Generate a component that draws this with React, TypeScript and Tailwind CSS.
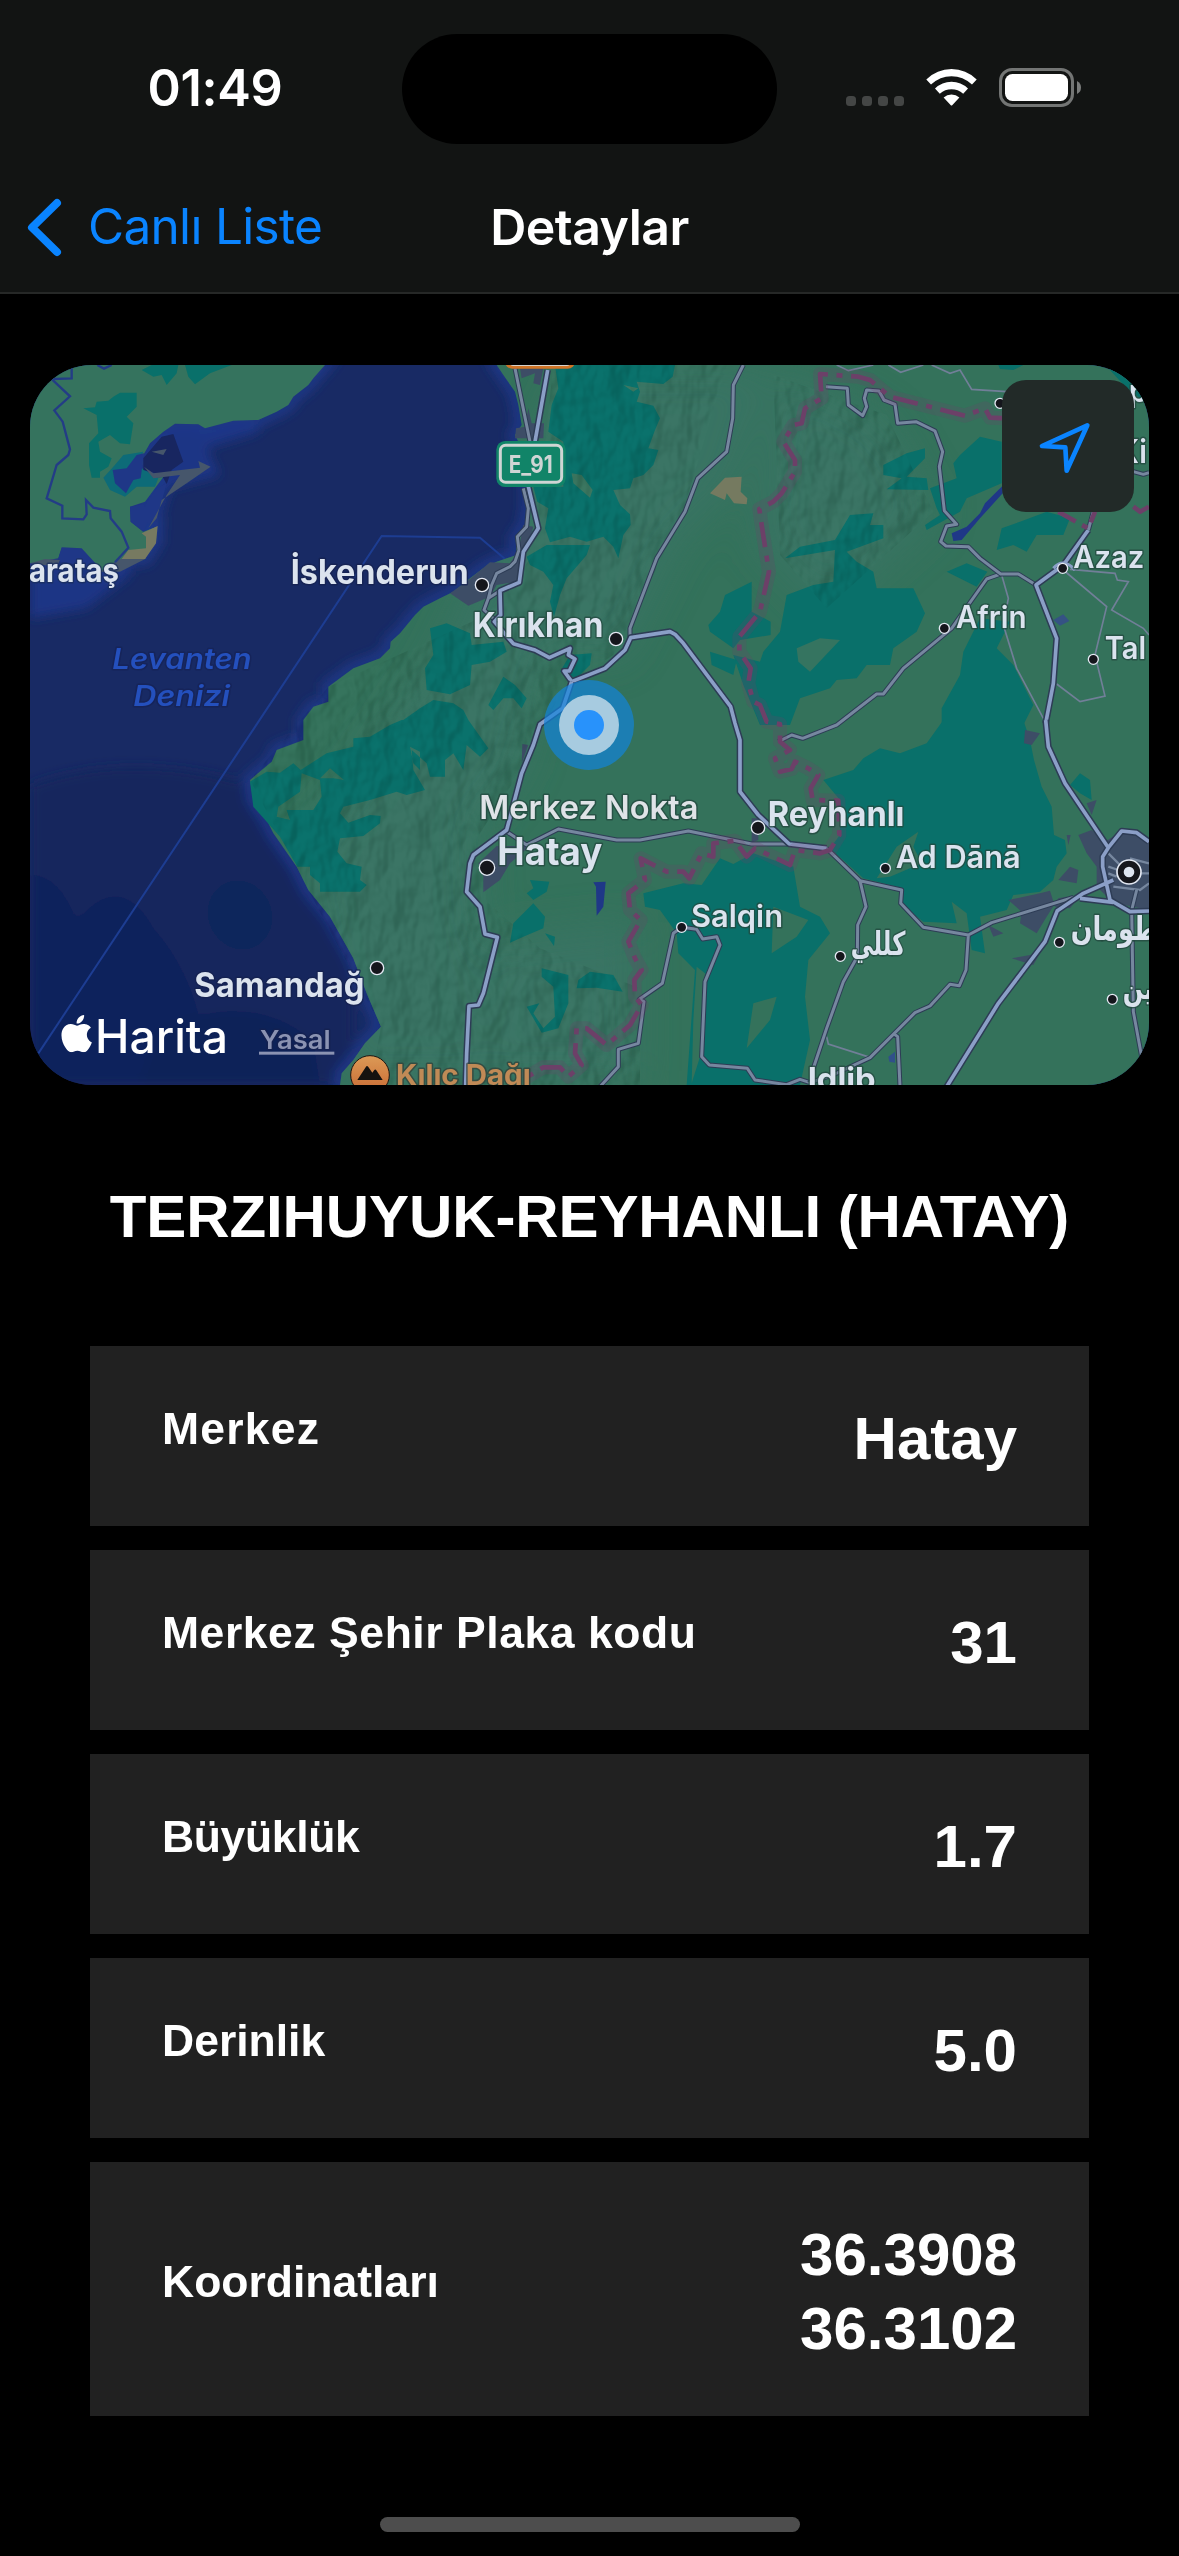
import React from "react";
import { SiApple } from "react-icons/si";

const FOREST = "#09706a";
const URBAN = "#3d4d66";

/* The map is drawn on a 3x grid, split into a 3 by 2 set of tiles. */
function Tile({ col, row, children }: { col: number; row: number; children: React.ReactNode }) {
  return <g transform={`translate(${col * 1140} ${row * 1095})`}>{children}</g>;
}

function Road({ d, major }: { d: string; major?: boolean }) {
  return (
    <g fill="none" strokeLinejoin="round">
      <path d={d} stroke="#2d3c55" strokeWidth={major ? 20 : 15} />
      <path d={d} stroke={major ? "#8b9fc7" : "#76879f"} strokeWidth={major ? 11 : 9} />
    </g>
  );
}

function Minor({ d }: { d: string }) {
  return <path d={d} fill="none" stroke="#717f98" strokeWidth={5} />;
}

type LabelProps = {
  x: number;
  y: number;
  w?: number;
  size?: number;
  weight?: number;
  fill?: string;
  italic?: boolean;
  halo?: string;
  children: string;
};

function Label({ x, y, w, size = 102, weight, fill = "#dbe3ee", italic, halo = "#23483f", children }: LabelProps) {
  return (
    <text
      x={x}
      y={y}
      textLength={w}
      lengthAdjust="spacingAndGlyphs"
      fontSize={size}
      fontWeight={weight ?? (size > 100 ? 700 : 600)}
      fontStyle={italic ? "italic" : "normal"}
      fill={fill}
      stroke={halo}
      strokeWidth={9}
      strokeLinejoin="round"
      strokeOpacity={0.75}
      paintOrder="stroke"
      fontFamily="Inter, 'DejaVu Sans', sans-serif"
    >
      {children}
    </text>
  );
}

function Town({ x, y, r = 17 }: { x: number; y: number; r?: number }) {
  return <circle cx={x} cy={y} r={r} fill="#15161c" stroke="#e3e8f2" strokeWidth={4} />;
}

const MAIN_LAND =
  "M1430 30L1450 60L1485 110L1495 150L1505 210L1485 240L1510 290L1525 400L1525 450L1515 510L1487 550L1490 600L1430 620L1390 640L1350 670L1300 710L1260 730L1210 755L1185 780L1140 835L1112 860L1110 880L1080 910L1000 940L925 995L925 1040L880 1055L850 1095V1155L770 1185L755 1220L690 1275L700 1335L740 1395L760 1435L830 1535L865 1605L930 1685L1000 1810L1040 1915L1083 2015L1035 2065L1000 2115L965 2155L960 2190H3387V30Z";
const WEST_LAND =
  "M30 30H915L880 70L865 90L820 125L805 150L770 170L715 195L640 197L555 220L535 208L465 206L430 230L390 265L370 300L365 340L385 370L430 366L405 400L375 440L330 455L332 500L370 530L410 515L408 560L375 610L305 612L270 630L250 650L205 625L160 580H125L115 610L30 625Z";

function Sea() {
  return (
    <g>
      <rect x="30" y="30" width="3357" height="2160" fill="#182a64" />
      <g filter="url(#soft)">
        <path d="M30 1290Q330 1180 700 1290Q900 1500 1000 1850V2190H30Z" fill="#18255d" />
        <path d="M30 1560Q120 1560 170 1700Q300 1540 400 1720Q560 1900 560 2190H30Z" fill="#0b235b" />
        <ellipse cx="660" cy="1680" rx="95" ry="105" fill="#0c265b" transform="rotate(-25 660 1680)" />
        <path d="M420 2020Q700 1900 880 2060L900 2190H360Z" fill="#0e2259" />
        <path d="M30 625L250 660L400 560L450 400L600 360L560 280L720 230L700 190L400 220L330 660L200 760L30 790Z" fill="#1e3685" />
        <g fill="none" stroke="#1f3a8b" strokeWidth="40" opacity="0.85">
          <path d={MAIN_LAND} />
          <path d={WEST_LAND} />
        </g>
      </g>
      <path d="M55 2095L1085 543L1380 548L1455 612" fill="none" stroke="#1d3d92" strokeWidth="6" />
    </g>
  );
}

function Land() {
  return (
    <g>
      <path d={WEST_LAND} fill="#35735e" />
      <path d={MAIN_LAND} fill="#34725b" />
      <g clipPath="url(#mainland)">
        <g filter="url(#wide)" fill="#3a7466" opacity="0.75">
          <path d="M1650 30H2260L2150 400L1980 560L1800 920L1600 870L1500 1250L1380 1400L1400 2190H960L830 1500L1250 900Z" />
          <path d="M2280 30L2600 200L2760 480L2420 780L2200 560Z" />
          <path d="M1400 1750L1850 1700V2190H1400Z" />
        </g>
      </g>
      <g fill={FOREST}>
        <path d="M365 45L395 30H475L470 55L440 90L425 60L400 65ZM495 30H635L570 55L525 88L505 65Z" />
        <path d="M280 125L300 113H350L350 155L320 185L340 205L330 268L300 265L270 240L235 260L240 290L275 310L265 335L240 350L240 368L215 368L207 330L207 265L235 235L230 180L190 160L225 157L230 140L265 137Z" />
      </g>
      <path d="M250 368L280 335L310 300L370 290L350 330L415 370L405 395L350 395L315 425L270 405Z" fill="#0d6b78" />
      <path d="M278 345L320 340L350 300L372 295L362 370L340 375L318 415L285 385ZM115 610L125 577L185 580L240 640L210 640L150 625L120 620Z" fill="#1f3787" />
      <path d="M370 310L425 245L460 237L490 320L455 345L440 388L425 360L370 345Z" fill="#182660" />
      <path d="M330 455L370 448L395 480L370 530L332 500ZM410 400L440 385L425 440L412 480L385 510L375 450Z" fill="#1f3787" />
      <path d="M395 290L440 282L430 300ZM372 335L400 355L540 338L535 318L572 335L500 385L425 435L410 490L385 520L440 420L480 360L400 370ZM30 625L75 612L120 615L110 635ZM240 650L300 612L380 610L300 650Z" fill="#46566b" />
      <path d="M365 535L413 513L408 565L375 612H305L325 585L378 580V545Z" fill="#777a61" />

      <Tile col={1} row={0}>
        <g fill={FOREST}>
          <path d="M465 30H825L818 65L790 87L710 80L720 110L710 140L760 152L780 190L765 225L745 280L775 285L760 330L730 360L700 370L690 400L640 405L660 450L690 478L692 510L670 540L655 610L640 575L610 545L560 560L510 545L450 562L435 520L445 460L412 440L400 395H490V260L445 230L455 150L475 100Z" />
          <path d="M380 605L440 570H570L560 600L500 670L480 720L462 785L450 740L460 690L430 650L390 630Z" />
          <path d="M90 820L140 805L210 835L215 870L310 860L320 890L270 920L215 930L210 990L150 1018L80 1005L75 940L100 900ZM310 965L345 990L380 1030L365 1060L340 1030H310L280 1065L265 1050ZM510 900L575 895L570 930L530 970L480 950Z" />
          <path d="M1055 680V770L1112 800V840L1020 855L1000 880L930 830L925 810L960 770L975 720ZM930 890L1010 915L1000 960L935 930Z" />
        </g>
        <path d="M515 355L545 360L578 405L570 428L520 385ZM670 90L715 100L700 110Z" fill="#3a755f" />
        <path d="M930 415L975 368L1025 365L1022 410L1042 430L1040 448L1002 445L980 415L975 435Z" fill="#757a60" />
        <g fill={URBAN}>
          <path d="M360 40H430L420 90L400 85L405 55L365 70ZM345 250L348 220L375 215L385 160L395 205L432 205L430 250Z" />
          <path d="M150 715L200 680L270 622L330 625L355 590L370 510L400 515L375 600L350 680L290 690L270 725L205 752Z" />
        </g>
      </Tile>

      <Tile col={2} row={0}>
        <g fill={FOREST}>
          <path d="M15 610L60 575L165 555L210 480L280 475L270 510H310V550L200 590L230 620L280 650L290 700L400 700L435 775L410 830L340 880L330 930L260 930L230 970L170 975L150 1000L60 1030L30 1110H-60L-110 990L-140 900L-60 920L-50 890L0 830L20 720L100 690L160 680L165 585Z" />
          <path d="M310 330L380 295L435 280V310L380 365L440 370L445 405L320 403L365 370L310 360ZM540 300L600 245L665 260V385L560 430L540 470L440 525L435 510L480 480L470 460L450 400L530 370L520 325ZM500 650L560 625L622 650L590 695Z" />
          <path d="M600 790L690 800L650 880L700 930L730 990L760 1050L730 1110H485V1060L540 960L550 890ZM665 520L720 500L800 470L870 490L850 540L770 540L740 590L700 570L650 585ZM985 40L1060 60L1107 150L1040 100ZM655 30H730L700 45L660 42Z" />
        </g>
        <path d="M50 880L120 850L180 855L90 950L55 920Z" fill="#357460" />
        <path d="M515 535L560 515L600 475L615 445L668 392V415L600 490L545 555L520 558Z" fill="#1f3787" />
        <path d="M820 795L850 778L868 798L840 812Z" fill="#355284" />
      </Tile>

      <Tile col={0} row={1}>
        <path
          fillRule="evenodd"
          fill={FOREST}
          d="M690 185L740 155L780 158L820 130L842 150L920 100L1000 80V55L1050 50L1110 15L1145 0H1345L1405 85L1380 110L1340 75L1330 150L1300 100L1275 120V170H1230L1220 130L1175 90L1180 150L1215 210L1160 225L1130 215L1050 240L970 260L960 280L985 308L1050 285L1082 288L1080 310L1030 348L960 355L952 395L980 430L1025 440L1020 480L1040 495L1020 515H900V490L870 465V440H832L780 350L700 260ZM845 160L900 180L905 230L880 270H800L810 300L770 290L775 260L840 215ZM900 175L930 145L972 180L940 175ZM1170 80L1200 95V150L1180 130Z"
        />
        <path d="M1150 0L1200 -35L1240 -60L1300 -50L1330 -30L1345 0Z" fill={FOREST} />
      </Tile>

      <Tile col={1} row={1}>
        <g fill={FOREST}>
          <path d="M390 480L448 485L440 515L400 540L380 520L400 505ZM400 550L435 590L430 625L370 650L330 668L340 610ZM435 640L465 650L462 678ZM425 745L505 765V850L475 925L425 938L380 860L418 850L400 880L430 925L465 890L460 800L425 770ZM535 780L570 755L640 765L668 815L590 803L530 805Z" />
          <path
            fillRule="evenodd"
            d="M730 520L850 490L905 495L960 415L1000 432L1060 400L1180 440L1200 560L1260 590L1290 640L1225 720L1215 830L1230 960L1200 1095H860L885 750L835 700L830 640L780 570L735 560ZM1120 560L1225 600L1190 650L1115 700ZM1060 850L1130 830L1110 900L1040 985ZM890 740L915 760L900 1010L875 1090L880 900Z"
          />
        </g>
        <path d="M235 430L290 378L390 378L330 430L300 480L250 517V470ZM367 72L385 75L365 130ZM1055 295H1075V360L1055 368Z" fill={URBAN} />
        <path d="M580 487L617 485L610 560L590 587L588 500Z" fill="#1f3787" />
      </Tile>

      <Tile col={2} row={1}>
        <path
          fillRule="evenodd"
          fill={FOREST}
          d="M490 0H730L750 60L762 120L785 200L815 260L822 345L855 360L860 400L830 440L820 480L780 515L700 525L680 570L600 590L615 700L575 690L560 580L515 545L530 610L430 605L360 550L370 505L250 475L150 385L180 345V240L130 180L220 150L250 115L300 85L360 100L440 70ZM350 380L415 335L400 380L425 430L330 470L290 475ZM870 195L900 160L930 180L935 240L900 220Z"
        />
        <g fill={URBAN}>
          <path d="M735 30L780 40L755 75L732 70ZM920 250L950 240L935 285ZM860 345L872 345L865 375ZM895 345L935 330L975 365L1025 333L1107 360V570L1000 548L950 500V440L920 400ZM685 540L780 520L810 512L825 560L870 565L890 540L860 530L835 535L800 590L770 640L720 610L725 575ZM835 480L870 440L895 450L890 490ZM695 715L780 700L760 735ZM625 615L670 640L640 650Z" />
        </g>
        <path d="M325 1010L345 995V1028L328 1025Z" fill="#30508a" />
      </Tile>
    </g>
  );
}

function Roads() {
  return (
    <g>
      <Tile col={0} row={0}>
        <path
          d="M155 30V70L95 72L150 124L103 166L128 200L150 283L145 300L110 330L80 430L127 452V490L190 493L200 478L198 435L220 458L270 468L272 490L305 530L325 578L285 622M232 30L252 41L275 30"
          fill="none"
          stroke="#233c86"
          strokeWidth="7"
        />
      </Tile>

      <Tile col={2} row={0}>
        <Minor d="M170 30L205 47L280 30M325 30L362 52L430 30M455 30L510 55L540 45L575 103L680 110M850 645L980 755L945 900L975 1023L900 1040L830 987M870 643L1005 655L1012 675L1045 680L995 765L1090 820L1107 840M665 660L685 730L670 810L710 940L790 1090" />
      </Tile>
      <Tile col={2} row={1}>
        <Minor d="M140 950L145 972L270 1012" />
        <path d="M980 395L1020 435M985 440L1015 450M985 460L1010 470M1000 500L1080 510L1107 490M1050 415L1107 430M1080 460H1107" fill="none" stroke="#76879f" strokeWidth="7" />
      </Tile>

      <Tile col={1} row={0}>
        <Road d="M345 40L390 260M370 400L385 460L380 515L352 545L357 585L345 620L330 635L290 655L275 690L265 730L252 765L280 790M265 730L300 707" />
        <Road d="M1030 30L1000 90L998 190L980 290L893 370L855 470L770 610L690 820V850" />
      </Tile>
      <Tile col={1} row={1}>
        <Road d="M320 335L380 375L475 327L650 360H720L865 333L1055 372H1170" />
        <Road d="M845 622L890 628L908 657L950 650L960 675L915 785L905 1010L928 1035L1042 1045L1065 1080L1160 1094L1200 1078L1230 1088" />
        <Road d="M845 622L820 640L787 790L718 838L732 845L715 970L655 988V1040L600 1100" />
        <Road d="M1135 65L1175 45L1208 55L1310 15L1430 -78L1450 -78L1510 -155L1655 -275L1760 -423L1802 -438" />
      </Tile>
      <Tile col={2} row={0}>
        <Road d="M138 95L202 100L205 150L248 182L260 155L253 130L260 105L297 108L312 135L345 148L353 205L408 200L465 228L488 290L478 335L493 467L530 508L500 513L482 560L498 573L565 575L600 610L662 657H715L768 690" />
        <Road major d="M797 1105L820 985L830 850L768 690L850 630L925 525" />
        <Road d="M925 525L940 470M1060 350L1090 358L1107 353" />
        <path d="M820 640Q850 605 885 645" fill="none" stroke="#8b9fc7" strokeWidth="9" />
      </Tile>
      <Tile col={2} row={1}>
        <Road d="M140 385L240 482L365 510L362 550L430 622L565 645L635 608L880 532M565 645L558 750L538 797L510 793L450 858L405 878L270 1013L165 1062L85 1090M240 482L258 560L233 615L232 710L190 785L140 925L100 1045M340 940L353 950L360 1100M1070 510L1055 570L1060 875L1085 1010" />
        <Road major d="M797 0L805 80L855 190L985 383L968 410V440L990 540L1050 575L1107 573M985 383L1025 333L1070 338L1107 365M1000 480L910 520L832 572L795 665L655 850L500 1100M900 535L1000 547" />
      </Tile>
      <Tile col={1} row={0}>
        <Road
          major
          d="M443 45L405 260M385 395L415 520L370 590L358 682L300 707L302 780L283 800L340 866L405 885L448 908L510 880L505 900L525 912L508 948H492L515 980L615 940L675 885L692 848L810 830L825 838L850 865L992 1055L1005 1105L1020 1155V1310L1075 1380L1168 1467L1280 1480"
        />
        <Road
          major
          d="M515 980L488 1060L420 1108L400 1170L365 1255L320 1425L220 1500L210 1525L200 1610L240 1655L255 1737L292 1747L270 1835L250 1915L235 1950L207 1953L200 2095L197 2195"
        />
      </Tile>
    </g>
  );
}

const BORDER =
  "M1820 190L1770 188L1755 160L1695 182L1470 125L1410 75L1375 65L1260 57L1265 130L1215 160L1205 205L1180 210L1150 260L1185 315V350L1145 415L1120 440L1078 462L1088 530L1107 650L1080 770L1018 845V890L1052 940L1045 985L1060 1040L1080 1050L1100 1100L1140 1107V1160L1170 1185L1125 1210L1140 1250L1175 1242L1185 1220L1225 1240L1255 1260L1232 1300L1238 1335L1315 1337L1318 1440L1290 1485L1260 1495L1185 1485L1170 1530L1065 1480L1040 1505L1005 1457L940 1465V1505L905 1495L868 1570L850 1550H800L722 1510L735 1575L685 1615L690 1665L722 1695L685 1760L705 1810L725 1845L703 1875L705 1925L725 1950L690 2010L620 2070L560 2020H530L525 2095L545 2130L505 2165L480 2137H430L370 2173";

function Border() {
  return (
    <g transform="translate(1140 0)" fill="none" strokeLinejoin="round" stroke="#6c4068">
      <path d={BORDER} strokeWidth="42" opacity="0.22" />
      <path d={BORDER} strokeWidth="14" strokeDasharray="76 26 18 26" />
      <path d="M1975 470L2045 510L2065 520L2085 470M2200 455L2220 470L2247 455" strokeWidth="14" strokeDasharray="60 22 18 22" />
    </g>
  );
}

function Labels() {
  return (
    <g>
      <Tile col={0} row={0}>
        <Label x={27} y={682} w={270} size={98} weight={700} halo="#1b2f5c">arataş</Label>
        <Label x={812} y={687} w={534} halo="#16224f">İskenderun</Label>
        <Label x={277} y={941} w={418} size={86} fill="#2450bd" italic halo="#152357">Levanten</Label>
        <Label x={340} y={1053} w={290} size={86} fill="#2450bd" italic halo="#152357">Denizi</Label>
      </Tile>
      <Tile col={1} row={0}>
        <rect x="315" y="0" width="210" height="41" rx="22" fill="#cf7326" />
        <rect x="330" y="0" width="180" height="33" rx="10" fill="#d5d2cc" />
        <rect x="289" y="258" width="208" height="138" rx="26" fill="#118468" />
        <rect x="301" y="271" width="184" height="111" rx="16" fill="none" stroke="#cfd5d4" strokeWidth="9" />
        <text x="326" y="354" textLength="132" lengthAdjust="spacingAndGlyphs" fontFamily="Inter, sans-serif" fontWeight="700" fontSize="72" fill="#cfd5d4">
          E_91
        </text>
        <Town x={246} y={690} r={20} />
        <Label x={218} y={847} w={392}>Kırıkhan</Label>
        <Town x={648} y={852} r={20} />
        <circle cx="567" cy="1110" r="135" fill="#1285dd" opacity="0.68" />
        <circle cx="567" cy="1110" r="90" fill="#a7cbe0" />
        <circle cx="567" cy="1110" r="45" fill="#2892fb" />
      </Tile>
      <Tile col={2} row={0}>
        <Town x={660} y={145} r={15} />
        <Label x={1046} y={140} size={92}>p</Label>
        <Label x={1015} y={323} w={86} size={98}>Ki</Label>
        <Town x={848} y={640} r={15} />
        <Label x={880} y={639} w={213} size={92}>Azaz</Label>
        <Town x={493} y={820} r={15} />
        <Label x={528} y={820} w={212} size={92}>Afrin</Label>
        <Town x={940} y={913} r={15} />
        <Label x={974} y={912} w={124} size={92}>Tal</Label>
      </Tile>
      <Tile col={0} row={1}>
        <Town x={1071} y={744} r={20} />
        <Label x={523} y={831} w={510} halo="#16224f">Samandağ</Label>
        <SiApple x={114} y={885} size={112} color="#ffffff" />
        <text x="225" y="998" textLength="399" lengthAdjust="spacingAndGlyphs" fontFamily="Inter, sans-serif" fontWeight="500" fontSize="139" fill="#ffffff">
          Harita
        </text>
        <Label x={720} y={986} w={212} size={78} weight={600} fill="#8b93b2" halo="#16224f">Yasal</Label>
        <rect x="717" y="995" width="226" height="9" fill="#8b93b2" />
        <circle cx="1050" cy="1065" r="58" fill="url(#peak)" stroke="#1d1512" strokeWidth="3" />
        <path d="M1012 1080L1038 1040Q1041 1036 1045 1041L1057 1058L1063 1050Q1066 1046 1070 1052L1088 1080Z" fill="#15120f" />
      </Tile>
      <Tile col={1} row={1}>
        <Label x={238} y={296} w={657} size={96} weight={600} fill="#dfe3e7">Merkez Nokta</Label>
        <Town x={261} y={443} r={23} />
        <Label x={292} y={434} w={315} size={114}>Hatay</Label>
        <Town x={1074} y={323} r={20} />
        <Label x={1103} y={319} w={410}>Reyhanlı</Label>
        <Town x={845} y={622} r={15} />
        <Label x={873} y={620} w={276} size={92}>Salqin</Label>
        <Label x={-12} y={1095} w={404} size={86} weight={700} fill="#c08a56" halo="#33413a">Kılıç Dağı</Label>
      </Tile>
      <Tile col={2} row={1}>
        <Town x={316} y={445} r={15} />
        <Label x={347} y={445} w={375} size={92}>Ad Dānā</Label>
        <Town x={181} y={709} r={15} />
        <Label x={212} y={705} w={164} size={98}>كللي</Label>
        <Town x={838} y={667} r={15} />
        <Label x={872} y={661} w={262} size={98}>طومان</Label>
        <Town x={997} y={838} r={15} />
        <Label x={1028} y={836} w={92} size={94}>ين</Label>
        <Label x={83} y={1110} w={204} size={94} weight={700}>Idlib</Label>
        <circle cx="1047" cy="456" r="36" fill="#15161c" stroke="#e3e8f2" strokeWidth="5" />
        <circle cx="1047" cy="456" r="16" fill="#dde4f0" />
      </Tile>
    </g>
  );
}

function MapView() {
  return (
    <svg viewBox="30 30 3357 2160" className="block h-full w-full">
      <defs>
        <filter id="soft" x="-10%" y="-10%" width="120%" height="120%">
          <feGaussianBlur stdDeviation="16" />
        </filter>
        <filter id="wide">
          <feGaussianBlur stdDeviation="60" />
        </filter>
        <filter id="relief" x="0" y="0" width="100%" height="100%" colorInterpolationFilters="sRGB">
          <feTurbulence type="fractalNoise" baseFrequency="0.014 0.009" numOctaves="3" seed="8" result="noise" />
          <feDiffuseLighting in="noise" surfaceScale="34" lightingColor="#747474" diffuseConstant="1.3">
            <feDistantLight azimuth="215" elevation="50" />
          </feDiffuseLighting>
        </filter>
        <clipPath id="mainland">
          <path d={MAIN_LAND} />
        </clipPath>
        <clipPath id="hills" clipPathUnits="userSpaceOnUse">
          <path d="M1600 30H2120L1980 500L1780 900L1630 1000L1500 1250L1370 1450L1400 1640L1560 1780L1860 1900V2190H1050L1083 2015L865 1605L690 1275L925 995L1400 780L1540 600Z M2260 60L2600 180L2740 470L2420 760L2280 600Z" />
        </clipPath>
        <linearGradient id="peak" x1="0" y1="0" x2="0" y2="1">
          <stop offset="0" stopColor="#dc9a56" />
          <stop offset="1" stopColor="#c86a34" />
        </linearGradient>
      </defs>
      <Sea />
      <Land />
      <g clipPath="url(#hills)" className="mix-blend-soft-light" opacity="0.22">
        <rect x="30" y="30" width="3357" height="2160" filter="url(#relief)" />
      </g>
      <Roads />
      <Border />
      <Labels />
    </svg>
  );
}

function StatusIcons() {
  return (
    <svg viewBox="846 66 238 44" className="h-[44px] w-[238px]">
      <g fill="#444645">
        <rect x="846" y="96" width="10" height="10" rx="3.5" />
        <rect x="862" y="96" width="10" height="10" rx="3.5" />
        <rect x="878" y="96" width="10" height="10" rx="3.5" />
        <rect x="894" y="96" width="10" height="10" rx="3.5" />
      </g>
      <g fill="#ffffff">
        <path d="M926.3 79.5Q937 69 951.5 69T976.7 79.5L972 84.6Q963 76.3 951.5 76.3T931 84.6Z" />
        <path d="M935 88.6Q942 81.8 951.5 81.8T968 88.6L963.2 93.7Q958 89.3 951.5 89.3T939.8 93.7Z" />
        <path d="M943.6 97.4Q947 94.4 951.5 94.4T959.4 97.4L952.2 105.2Q951.5 106 950.8 105.2Z" />
        <rect x="1005" y="74" width="63" height="27" rx="7.5" />
      </g>
      <rect x="1000.5" y="69.5" width="72" height="36" rx="11.5" fill="none" stroke="#737574" strokeWidth="3" />
      <path d="M1077 81Q1081 83 1081 87.5T1077 94Z" fill="#7a7c7b" />
    </svg>
  );
}

type RowProps = { label: string; tracking?: string; tall?: boolean; children: React.ReactNode };

function Row({ label, tracking = "tracking-normal", tall, children }: RowProps) {
  return (
    <div className={`flex items-center justify-between bg-[#212121] px-[72px] pt-[5px] ${tall ? "h-[254px]" : "h-[180px]"}`}>
      <span className={`pb-[20px] text-[44.5px] leading-[54px] ${tracking}`}>{label}</span>
      <span className="text-right text-[60px] leading-[74px]">{children}</span>
    </div>
  );
}

export default function App() {
  return (
    <div className="flex h-[2556px] w-[1179px] flex-col overflow-hidden bg-black text-white">
      <header className="h-[294px] shrink-0 border-b-2 border-[#262827] bg-[#121413] font-['Inter',sans-serif]">
        <div className="grid h-[144px] grid-cols-[402px_375px_402px] items-center pt-[34px]">
          <span className="pb-[2px] pl-[28px] text-center text-[50.5px] leading-none font-semibold tracking-[-0.3px]">01:49</span>
          <div className="h-[110px] rounded-full bg-black" />
          <div className="pb-[2px] pl-[69px]">
            <StatusIcons />
          </div>
        </div>
        <div className="grid h-[149px] grid-cols-[400px_379px_400px] items-center pt-[17px]">
          <div className="flex items-center gap-[26px] pl-[26px] text-[#0a84ff]">
            <svg viewBox="0 0 36 60" className="h-[60px] w-[36px]">
              <path d="M31 6L6 30.5L31 55" fill="none" stroke="currentColor" strokeWidth="8" strokeLinecap="round" strokeLinejoin="round" />
            </svg>
            <span className="text-[49.5px] leading-none tracking-[-0.7px] whitespace-nowrap">Canlı Liste</span>
          </div>
          <h1 className="text-center text-[50px] leading-none font-semibold tracking-[-0.5px]">Detaylar</h1>
        </div>
      </header>

      <main className="flex flex-col pt-[71px] font-['Liberation_Sans',Arial,sans-serif] font-bold">
        <div className="relative mx-[30px] h-[720px] overflow-hidden rounded-[62px]">
          <MapView />
          <button className="absolute top-[15px] right-[15px] flex h-[132px] w-[132px] items-center justify-center rounded-[24px] bg-[#222a28]">
            <svg viewBox="667 75 396 396" className="h-full w-full">
              <path d="M923 211L787 273L857 277L861 347Z" fill="none" stroke="#0a84ff" strokeWidth="14" strokeLinejoin="round" />
            </svg>
          </button>
        </div>

        <h2 className="mt-[96px] text-center text-[60px] leading-[72px] tracking-[-0.1px] whitespace-nowrap">
          TERZIHUYUK-REYHANLI (HATAY)
        </h2>

        <section className="mx-[90px] mt-[93px] flex flex-col gap-[24px]">
          <Row label="Merkez" tracking="tracking-[1.2px]">Hatay</Row>
          <Row label="Merkez Şehir Plaka kodu" tracking="tracking-[0.55px]">31</Row>
          <Row label="Büyüklük" tracking="tracking-[-0.35px]">1.7</Row>
          <Row label="Derinlik">5.0</Row>
          <Row label="Koordinatları" tall>
            36.3908
            <br />
            36.3102
          </Row>
        </section>
      </main>

      <div className="mx-auto mt-[101px] h-[15px] w-[420px] shrink-0 rounded-full bg-[#4d4d4d]" />
    </div>
  );
}
